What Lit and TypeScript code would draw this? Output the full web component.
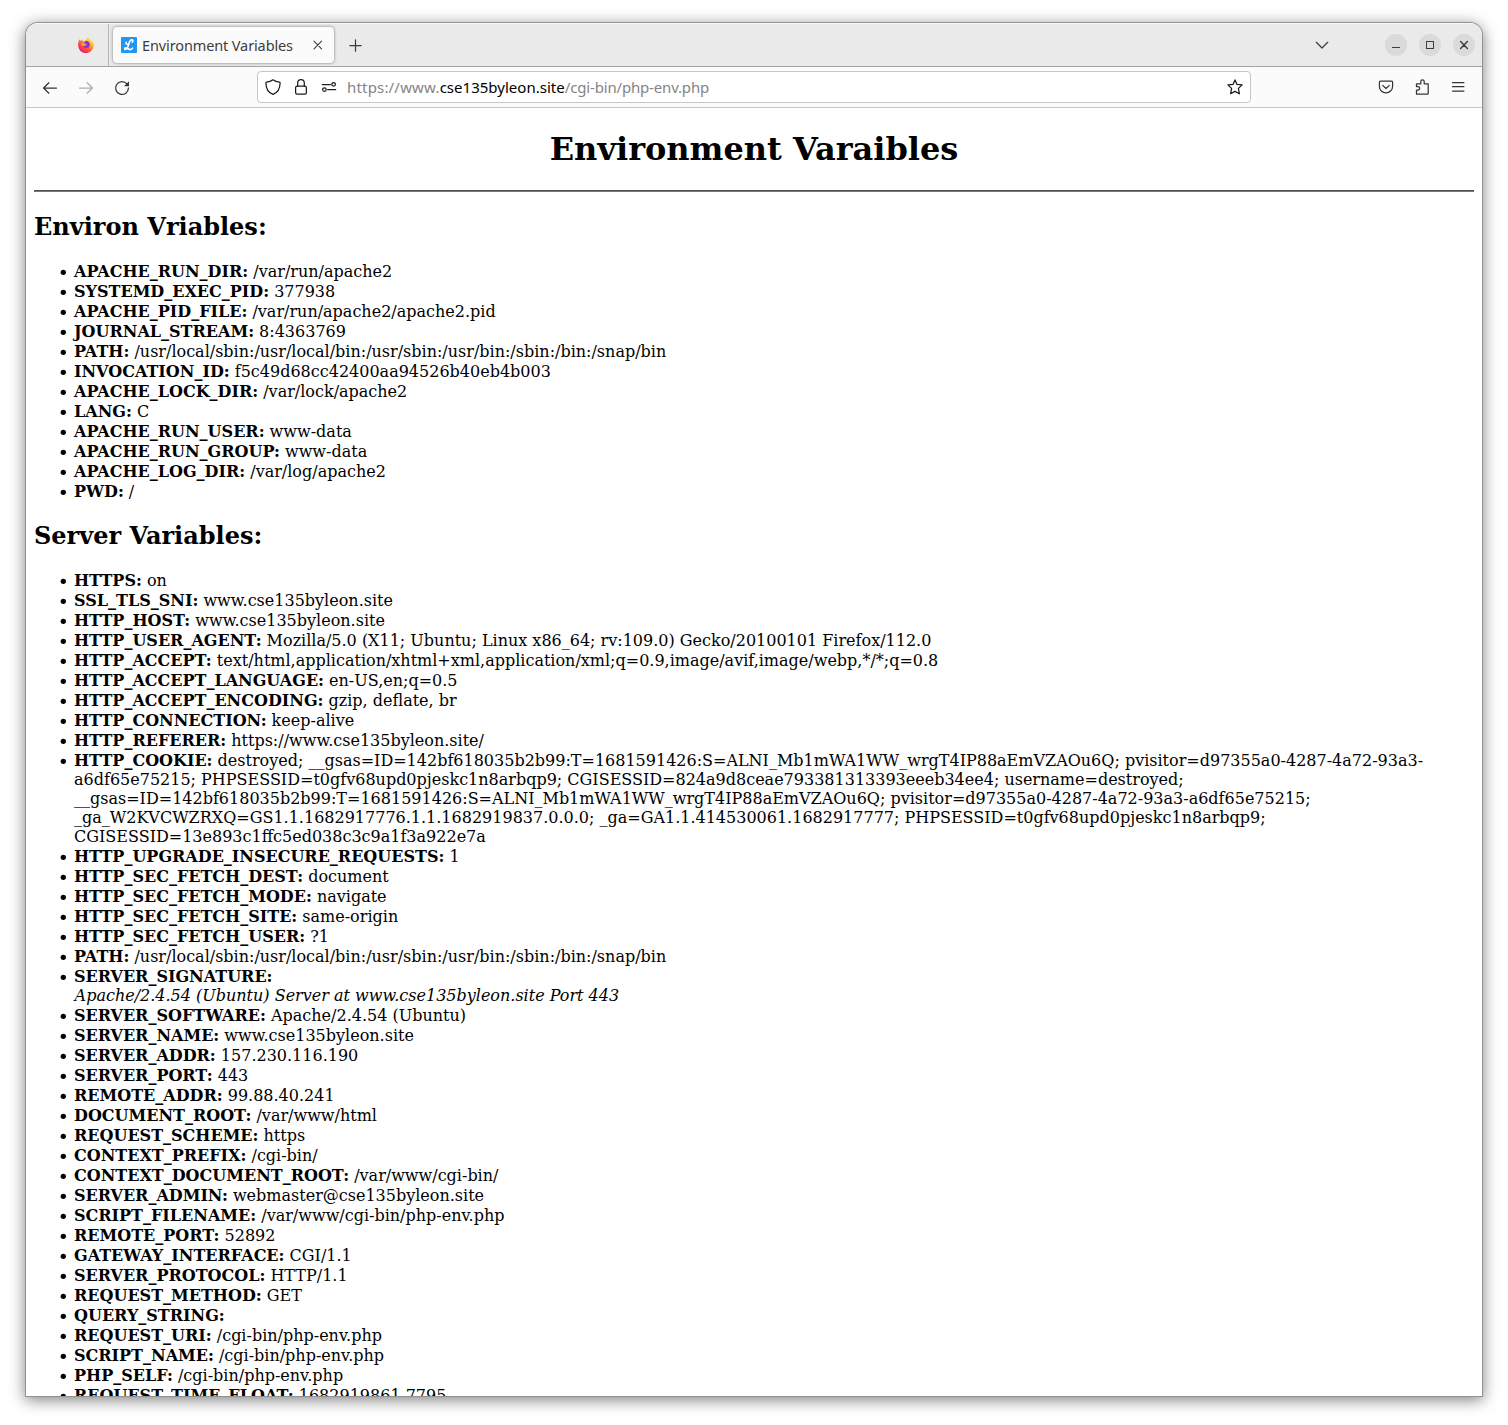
import { LitElement, html, css, svg, nothing } from "lit";
import { customElement, property } from "lit/decorators.js";

type Entry = [name: string, value: string, italic?: boolean];

const ENVIRON: Entry[] = [
  ["APACHE_RUN_DIR", "/var/run/apache2"],
  ["SYSTEMD_EXEC_PID", "377938"],
  ["APACHE_PID_FILE", "/var/run/apache2/apache2.pid"],
  ["JOURNAL_STREAM", "8:4363769"],
  ["PATH", "/usr/local/sbin:/usr/local/bin:/usr/sbin:/usr/bin:/sbin:/bin:/snap/bin"],
  ["INVOCATION_ID", "f5c49d68cc42400aa94526b40eb4b003"],
  ["APACHE_LOCK_DIR", "/var/lock/apache2"],
  ["LANG", "C"],
  ["APACHE_RUN_USER", "www-data"],
  ["APACHE_RUN_GROUP", "www-data"],
  ["APACHE_LOG_DIR", "/var/log/apache2"],
  ["PWD", "/"],
];

const SERVER: Entry[] = [
  ["HTTPS", "on"],
  ["SSL_TLS_SNI", "www.cse135byleon.site"],
  ["HTTP_HOST", "www.cse135byleon.site"],
  ["HTTP_USER_AGENT", "Mozilla/5.0 (X11; Ubuntu; Linux x86_64; rv:109.0) Gecko/20100101 Firefox/112.0"],
  ["HTTP_ACCEPT", "text/html,application/xhtml+xml,application/xml;q=0.9,image/avif,image/webp,*/*;q=0.8"],
  ["HTTP_ACCEPT_LANGUAGE", "en-US,en;q=0.5"],
  ["HTTP_ACCEPT_ENCODING", "gzip, deflate, br"],
  ["HTTP_CONNECTION", "keep-alive"],
  ["HTTP_REFERER", "https://www.cse135byleon.site/"],
  [
    "HTTP_COOKIE",
    "destroyed; __gsas=ID=142bf618035b2b99:T=1681591426:S=ALNI_Mb1mWA1WW_wrgT4IP88aEmVZAOu6Q; pvisitor=d97355a0-4287-4a72-93a3-\na6df65e75215; PHPSESSID=t0gfv68upd0pjeskc1n8arbqp9; CGISESSID=824a9d8ceae793381313393eeeb34ee4; username=destroyed;\n__gsas=ID=142bf618035b2b99:T=1681591426:S=ALNI_Mb1mWA1WW_wrgT4IP88aEmVZAOu6Q; pvisitor=d97355a0-4287-4a72-93a3-a6df65e75215;\n_ga_W2KVCWZRXQ=GS1.1.1682917776.1.1.1682919837.0.0.0; _ga=GA1.1.414530061.1682917777; PHPSESSID=t0gfv68upd0pjeskc1n8arbqp9;\nCGISESSID=13e893c1ffc5ed038c3c9a1f3a922e7a",
  ],
  ["HTTP_UPGRADE_INSECURE_REQUESTS", "1"],
  ["HTTP_SEC_FETCH_DEST", "document"],
  ["HTTP_SEC_FETCH_MODE", "navigate"],
  ["HTTP_SEC_FETCH_SITE", "same-origin"],
  ["HTTP_SEC_FETCH_USER", "?1"],
  ["PATH", "/usr/local/sbin:/usr/local/bin:/usr/sbin:/usr/bin:/sbin:/bin:/snap/bin"],
  ["SERVER_SIGNATURE", "Apache/2.4.54 (Ubuntu) Server at www.cse135byleon.site Port 443", true],
  ["SERVER_SOFTWARE", "Apache/2.4.54 (Ubuntu)"],
  ["SERVER_NAME", "www.cse135byleon.site"],
  ["SERVER_ADDR", "157.230.116.190"],
  ["SERVER_PORT", "443"],
  ["REMOTE_ADDR", "99.88.40.241"],
  ["DOCUMENT_ROOT", "/var/www/html"],
  ["REQUEST_SCHEME", "https"],
  ["CONTEXT_PREFIX", "/cgi-bin/"],
  ["CONTEXT_DOCUMENT_ROOT", "/var/www/cgi-bin/"],
  ["SERVER_ADMIN", "webmaster@cse135byleon.site"],
  ["SCRIPT_FILENAME", "/var/www/cgi-bin/php-env.php"],
  ["REMOTE_PORT", "52892"],
  ["GATEWAY_INTERFACE", "CGI/1.1"],
  ["SERVER_PROTOCOL", "HTTP/1.1"],
  ["REQUEST_METHOD", "GET"],
  ["QUERY_STRING", ""],
  ["REQUEST_URI", "/cgi-bin/php-env.php"],
  ["SCRIPT_NAME", "/cgi-bin/php-env.php"],
  ["PHP_SELF", "/cgi-bin/php-env.php"],
  ["REQUEST_TIME_FLOAT", "1682919861.7795"],
];

const ICONS: Record<string, unknown> = {
  back: svg`<path d="M14.500 8H1.700M6.900 2.800 1.600 8l5.300 5.200"/>`,
  forward: svg`<path d="M1.500 8h12.800M9.100 2.800 14.400 8l-5.300 5.200"/>`,
  reload: svg`<path d="M12.900 3.900A6.400 6.400 0 1 0 14.400 8"/><path d="M15 1.200v5H10z" fill="currentColor" stroke="none"/>`,
  shield: svg`<path d="M8 .8c2 1.500 4.400 2.200 6.500 2.400.4 0 .6.300.6.700-.1 5-1.700 9.500-7.100 11.400C2.600 13.400 1 8.900.9 3.900c0-.4.200-.7.600-.7C3.600 3 6 2.300 8 .8z"/>`,
  lock: svg`<rect x="2.600" y="7.200" width="10.800" height="8" rx="1.600"/><path d="M4.700 7.200V4a3.300 3.300 0 0 1 6.600 0v3.200"/>`,
  permissions: svg`<path d="M1.300 5.500h8M6.700 10.500h8"/><circle cx="12.600" cy="5.300" r="1.800"/><circle cx="3.400" cy="10.600" r="1.800"/>`,
  star: svg`<path d="M8 .9l2 4.500 5.100.5-3.700 3.500 1 5.400L8 12.400l-4.400 2.400 1-5.400L.9 5.900 6 5.400z"/>`,
  pocket: svg`<path d="M2.400 2.200h11.200c.6 0 1 .4 1 1v4.400a6.600 6.300 0 0 1-13.200 0V3.200c0-.6.4-1 1-1z"/><path d="M4.700 6.400 8 9.500l3.300-3.100"/>`,
  extensions: svg`<path d="M2.500 15.200V11h1.400a1.700 1.700 0 0 0 0-3.500H2.500V4.800h4.300V2.500a1.700 1.700 0 0 1 3.400 0v2.300h4v9.400c0 .6-.4 1-1 1z"/>`,
  menu: svg`<path d="M2.500 3.500h11.400M2.500 7.700h11.400M2.500 12h11.400"/>`,
  close: svg`<path d="M5 4.200l7.600 7.600M12.600 4.200 5 11.800" stroke-width="1.100"/>`,
  plus: svg`<path d="M7.500 2.800v11.400M1.800 8.500h11.400"/>`,
  chevron: svg`<path d="M2.300 5.300 8 11l5.700-5.700"/>`,
  minimize: svg`<path d="M4 10.500h8" stroke-width="1" stroke-linecap="butt"/>`,
  maximize: svg`<path d="M4.500 4.500h7v7h-7z" shape-rendering="crispEdges"/>`,
  quit: svg`<path d="M4.600 4.600l6.800 6.800M11.400 4.600l-6.800 6.800" stroke-width="1.400"/>`,
};

@customElement("ui-icon")
class UiIcon extends LitElement {
  @property() name = "";

  static styles = css`
    :host { display: block; width: 16px; height: 16px; flex: none; }
    .glyph {
      display: block; fill: none; stroke: currentColor; stroke-width: 1.25;
      stroke-linecap: round; stroke-linejoin: round; overflow: visible;
    }
  `;

  render() {
    return html`<svg class="glyph" width="16" height="16" viewBox="0 0 16 16">${ICONS[this.name]}</svg>`;
  }
}

@customElement("tab-strip")
class TabStrip extends LitElement {
  static styles = css`
    :host {
      display: flex; align-items: stretch; height: 44px; box-sizing: border-box; background: #eaeaea;
      color: #3d3d3d; border-bottom: 1px solid #a5a5a5; border-top: 1px solid #fafafa;
    }
    .pinned { width: 82px; display: flex; align-items: center; justify-content: flex-end; border-right: 1px solid #b5b5b5; }
    .firefox { margin-right: 14px; }
    .tab {
      display: flex; align-items: center; width: 221px; height: 36px; box-sizing: border-box;
      margin: 3px 0 0 4px; padding: 0 9px 0 8px; border-radius: 4px; background: #fbfbfb;
      box-shadow: 0 0 3px rgba(0, 0, 0, 0.5);
    }
    .title {
      flex: 1; margin-left: 5px; white-space: nowrap; color: #3d3d3d;
      font: 14.5px/20px "Noto Sans", "Open Sans", sans-serif; letter-spacing: -0.12px;
    }
    .plus { align-self: center; margin-left: 14px; }
    .spacer { flex: 1; }
    .chevron { align-self: center; margin-right: 55px; }
    .controls { display: flex; align-items: center; gap: 12px; padding-right: 7px; }
    .control { width: 22px; height: 22px; border-radius: 50%; background: #dadada; display: flex; align-items: center; justify-content: center; }
  `;

  render() {
    return html`
      <div class="pinned">
        <svg class="firefox" width="16" height="16" viewBox="0 0 16 16">
          <defs>
            <linearGradient id="flame" x1=".85" y1=".1" x2=".2" y2=".95">
              <stop offset="0" stop-color="#fff44f"/><stop offset=".3" stop-color="#ffb02e"/>
              <stop offset=".6" stop-color="#ff5634"/><stop offset="1" stop-color="#e5178a"/>
            </linearGradient>
          </defs>
          <path fill="url(#flame)" d="M15.300 5.300c-.4-1-1.300-1.900-1.900-2.200.5 1 .8 1.900.9 2.500C13.200 3 11.300 2 10.300.2c-2 1-2.300 2.600-2.300 3.300-1.200 0-2.300.3-3 .9-.6-.4-.7-1.200-.5-2.200C3.200 2.700 2.700 3.500 2.300 4 1.700 3.600 1.800 2.500 1.900 2 .8 3.200.1 5.300.1 8a7.800 7.800 0 0 0 15.700.6c.1-1.100 0-2.300-.5-3.300z"/>
          <path fill="#7b37d8" d="M8 3.900c2.800-.1 4 1.900 3.900 3.800-.1 1.900-1.600 3.300-3.600 3.300-1.700 0-2.900-.8-3.500-2 1.400.6 2.600.2 3.200-.4.400-.4 1-.2.900-.8C8.200 7 7 7.300 6.500 6.400 6 5.300 6.500 4.300 8 3.900z"/>
          <path fill="#ff9a2e" d="M3.300 6.500c1-.8 2-.5 3-.3L8.300 7.300 6.300 8.900l-2.500.2z"/>
        </svg>
      </div>
      <div class="tab">
        <svg width="16" height="16" viewBox="0 0 16 16">
          <rect width="16" height="16" rx="1" fill="#2196ee"/>
          <path fill="none" stroke="#fff" stroke-width="1.600" stroke-linecap="round" stroke-linejoin="round"
            d="M11.300 5.200c1-1 .8-2.300-.5-2.300-2.100 0-2.700 2.600-3.300 5-.6 2.600-1.400 4.500-3 4.500-1.200 0-1-1.600.2-1.500 1.900.1 2.900 1.700 4.600 1.700 1 0 1.700-.6 2.200-1.400M7.800 7.600C5.700 7.700 4.600 6.700 5.200 5.300"/>
        </svg>
        <span class="title">Environment Variables</span>
        <ui-icon name="close"></ui-icon>
      </div>
      <ui-icon class="plus" name="plus"></ui-icon>
      <div class="spacer"></div>
      <ui-icon class="chevron" name="chevron"></ui-icon>
      <div class="controls">
        <div class="control"><ui-icon name="minimize"></ui-icon></div>
        <div class="control"><ui-icon name="maximize"></ui-icon></div>
        <div class="control"><ui-icon name="quit"></ui-icon></div>
      </div>
    `;
  }
}

@customElement("nav-bar")
class NavBar extends LitElement {
  static styles = css`
    :host {
      display: flex; align-items: center; height: 41px; box-sizing: border-box; padding: 0 16px;
      background: #fbfbfb; border-bottom: 1px solid #c8c8c8; color: #353535;
    }
    .group { display: flex; gap: 20px; }
    .history { width: 215px; padding-top: 1px; }
    .dim { color: #aeaeae; }
    .address {
      flex: 1; display: flex; align-items: center; height: 32px; box-sizing: border-box; padding: 0 7px;
      border: 1px solid #c6c6c6; border-radius: 4px; background: #fff; color: #1c1c1c;
    }
    .badges { display: flex; gap: 12px; margin-right: 10px; }
    .url { flex: 1; white-space: nowrap; color: #858585; font: 15px/20px "Noto Sans", "Open Sans", sans-serif; }
    .scheme { letter-spacing: 0.18px; }
    .domain { color: #000; letter-spacing: 0.02px; }
    .path { letter-spacing: -0.17px; }
    .tools { margin-left: 127px; }
  `;

  render() {
    return html`
      <div class="group history">
        <ui-icon name="back"></ui-icon>
        <ui-icon class="dim" name="forward"></ui-icon>
        <ui-icon name="reload"></ui-icon>
      </div>
      <div class="address">
        <div class="badges">
          <ui-icon name="shield"></ui-icon>
          <ui-icon name="lock"></ui-icon>
          <ui-icon name="permissions"></ui-icon>
        </div>
        <div class="url"><span class="scheme">https://www.</span><span class="domain">cse135byleon.site</span><span class="path">/cgi-bin/php-env.php</span></div>
        <ui-icon name="star"></ui-icon>
      </div>
      <div class="group tools">
        <ui-icon name="pocket"></ui-icon>
        <ui-icon name="extensions"></ui-icon>
        <ui-icon name="menu"></ui-icon>
      </div>
    `;
  }
}

@customElement("variable-list")
class VariableList extends LitElement {
  @property() heading = "";
  @property({ attribute: false }) entries: Entry[] = [];

  static styles = css`
    :host { display: block; }
    .heading { margin: 20px 0; font-size: 24px; line-height: 29px; font-weight: bold; }
    .list { margin: 0; padding: 0 0 0 26px; list-style: none; }
    .item { display: flex; line-height: 19px; padding-top: 1px; white-space: pre; }
    .bullet { flex: none; width: 6px; height: 6px; margin: 7px 8px 0 0; fill: #000; }
    .note { margin-left: 0.6px; }
  `;

  render() {
    return html`
      <h2 class="heading">${this.heading}</h2>
      <ul class="list">
        ${this.entries.map(
          ([name, value, italic]) =>
            html`<li class="item"><svg class="bullet" viewBox="0 0 6 6"><circle cx="3.300" cy="3.300" r="2.650"/></svg><div><b>${name}:</b>${italic ? html`<br /><i class="note">${value}</i>` : value ? " " + value : nothing}</div></li>`
        )}
      </ul>
    `;
  }
}

@customElement("app-root")
class AppRoot extends LitElement {
  static styles = css`
    :host { display: block; width: 1508px; height: 1425px; box-sizing: border-box; padding: 23px 26px 29px; background: #fff; overflow: hidden; }
    .window {
      display: flex; flex-direction: column; height: 1373px; border-radius: 12px 12px 0 0; overflow: hidden;
      background: #fff; box-shadow: 0 0 0 1px #919191, 0 3px 15px 1px rgba(0, 0, 0, 0.5);
    }
    .page {
      flex: 1; min-height: 0; overflow: hidden; padding: 0 8px; color: #000;
      font: 16px/19px "DejaVu Serif", serif;
    }
    .title { margin: 22px 0 22px; font-size: 32px; line-height: 38px; text-align: center; }
    .rule { height: 0; margin: 0; border: 0; border-top: 1px solid #4f4f4f; border-bottom: 1px solid #7a7a7a; }
  `;

  render() {
    return html`
      <div class="window">
        <tab-strip></tab-strip>
        <nav-bar></nav-bar>
        <div class="page">
          <h1 class="title">Environment Varaibles</h1>
          <hr class="rule" />
          <variable-list .heading=${"Environ Vriables:"} .entries=${ENVIRON}></variable-list>
          <variable-list .heading=${"Server Variables:"} .entries=${SERVER}></variable-list>
        </div>
      </div>
    `;
  }
}
